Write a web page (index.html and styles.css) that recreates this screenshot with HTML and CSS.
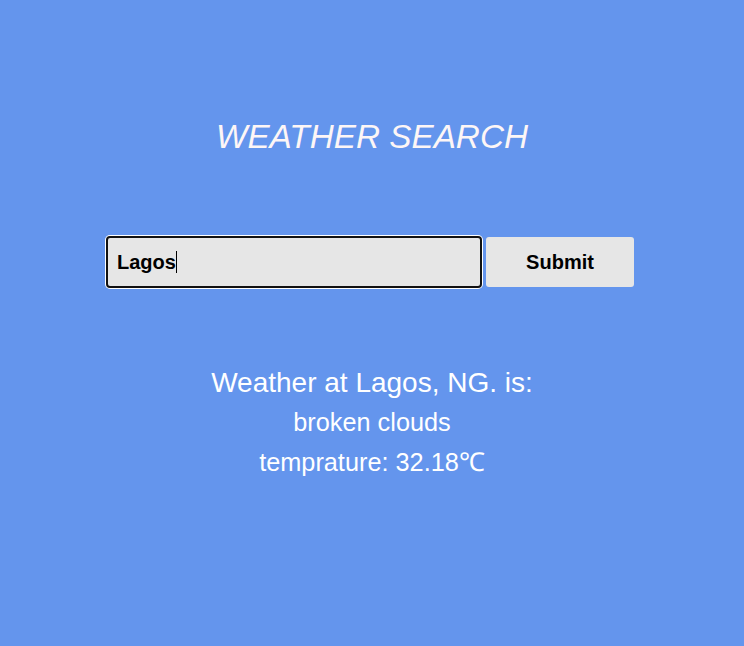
FILE: index.html
```html
<!DOCTYPE html>
<html>
<head>
<meta charset="utf-8">
<link rel="stylesheet" href="styles.css">
</head>
<body>
<main class="app">
  <h1 class="title">WEATHER SEARCH</h1>
  <form class="search">
    <div class="field">
      <input class="city" type="text" value="Lagos">
      <span class="caret-wrap"><span class="ghost">Lagos</span><span class="caret"></span></span>
    </div>
    <button class="submit" type="button">Submit</button>
  </form>
  <section class="result">
    <p class="place">Weather at Lagos, NG. is:</p>
    <p class="desc">broken clouds</p>
    <p class="temp">temprature: 32.18<span class="unit">℃</span></p>
  </section>
</main>
</body>
</html>
```
FILE: styles.css
```css
html, body {
  margin: 0;
  padding: 0;
  background: #6495ed;
  height: 100%;
}
body {
  font-family: "Liberation Sans", Arial, sans-serif;
  color: #fff;
}
.app {
  display: flex;
  flex-direction: column;
  align-items: center;
  padding-top: 117px;
}
.title {
  margin: 0;
  font-size: 33.3px;
  font-style: italic;
  font-weight: normal;
  line-height: 40px;
  color: #fdf6f6;
}
.search {
  display: flex;
  align-items: center;
  gap: 4px;
  margin-top: 79px;
  margin-left: -4px;
}
.field {
  position: relative;
}
.city {
  box-sizing: border-box;
  width: 376px;
  height: 52px;
  border: 2px solid #111;
  border-radius: 4px;
  box-shadow: 0 0 0 1px #fff;
  background: #e6e6e6;
  padding: 0 9px;
  font-family: "Liberation Sans", Arial, sans-serif;
  font-size: 20px;
  font-weight: bold;
  color: #000;
  outline: none;
  display: block;
}
.caret-wrap {
  position: absolute;
  left: 11px;
  top: 0;
  height: 52px;
  display: flex;
  align-items: center;
  font-size: 20px;
  font-weight: bold;
  pointer-events: none;
}
.ghost {
  visibility: hidden;
}
.caret {
  display: inline-block;
  width: 1px;
  height: 22px;
  background: #000;
}
.submit {
  box-sizing: border-box;
  width: 148px;
  height: 50px;
  border: none;
  border-radius: 3px;
  background: #e6e6e6;
  font-family: "Liberation Sans", Arial, sans-serif;
  font-size: 20px;
  font-weight: bold;
  color: #000;
}
.result {
  margin-top: 77px;
  display: flex;
  flex-direction: column;
  align-items: center;
}
.result p {
  margin: 0;
}
.place {
  font-size: 28px;
  line-height: 36px;
}
.desc {
  font-size: 25.3px;
  line-height: 40px;
  margin-top: 1px !important;
}
.temp {
  font-size: 25.3px;
  line-height: 40px;
}
.unit {
  font-family: "Liberation Serif", "Times New Roman", serif;
  font-size: 26px;
}
```
